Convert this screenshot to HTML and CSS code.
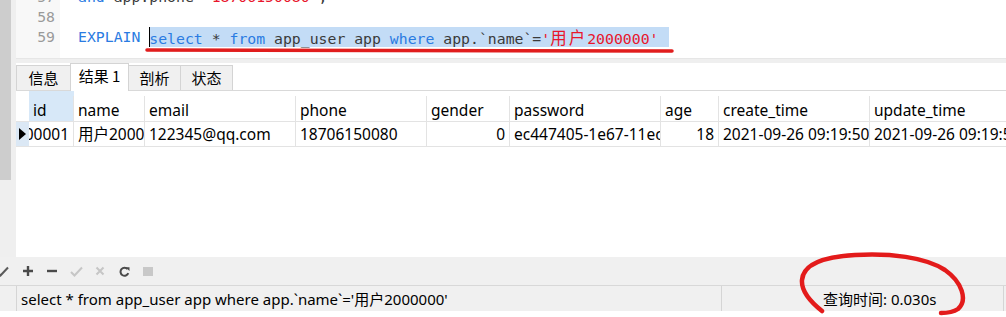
FILE: index.html
```html
<!DOCTYPE html>
<html>
<head>
    <title>查询结果</title>
    <link rel="stylesheet" href="styles.css">
</head>
<body>
    <div class="window">
        <div class="upper">
            <div class="vscroll"><div class="thumb"></div></div>
            <div class="main">
                <div class="editor">
                    <div class="gutter">
                        <div class="lines">
                            <div>57</div>
                            <div>58</div>
                            <div>59</div>
                        </div>
                    </div>
                    <div class="code">
                        <div class="lines">
                            <div class="ln"><span class="kw">and</span> app.phone=<span class="str">'18706150080'</span>;</div>
                            <div class="ln"> </div>
                            <div class="ln"><span class="kw">EXPLAIN</span> <span class="sel"><span class="kw">select</span> * <span class="kw">from</span> app_user app <span class="kw">where</span> app.`name`=<span class="str">'<span class="cjk">用户</span>2000000'</span></span></div>
                        </div>
                    </div>
                </div>

                <div class="tabs">
                    <div class="tab t-info">信息</div>
                    <div class="tab t-result active">结果 1</div>
                    <div class="tab t-prof">剖析</div>
                    <div class="tab t-state">状态</div>
                </div>

                <div class="grid">
                    <div class="cell hd ind-hd"></div>
                    <div class="cell hd picked">id</div>
                    <div class="cell hd">name</div>
                    <div class="cell hd">email</div>
                    <div class="cell hd">phone</div>
                    <div class="cell hd">gender</div>
                    <div class="cell hd">password</div>
                    <div class="cell hd">age</div>
                    <div class="cell hd">create_time</div>
                    <div class="cell hd">update_time</div>

                    <div class="cell ind">
                        <svg width="7" height="12" viewBox="0 0 7 12"><path d="M0 0L7 6L0 12z" fill="#000"/></svg>
                    </div>
                    <div class="cell num">2000001</div>
                    <div class="cell">用户2000001</div>
                    <div class="cell">122345@qq.com</div>
                    <div class="cell">18706150080</div>
                    <div class="cell num">0</div>
                    <div class="cell">ec447405-1e67-11ec-a6f2-00163e0a1b2c</div>
                    <div class="cell num">18</div>
                    <div class="cell">2021-09-26 09:19:50</div>
                    <div class="cell">2021-09-26 09:19:50</div>
                </div>
            </div>
        </div>

        <div class="toolbar">
            <span class="tb cut">
                <svg width="13" height="11" viewBox="0 0 13 11"><path d="M1 6l3.5 3.5L12 1.5" stroke="#5a5a5a" stroke-width="2" fill="none"/></svg>
            </span>
            <span class="tb">
                <svg width="12" height="12" viewBox="0 0 12 12"><path d="M6 1v10M1 6h10" stroke="#4a4a4a" stroke-width="2.4"/></svg>
            </span>
            <span class="tb">
                <svg width="12" height="12" viewBox="0 0 12 12"><path d="M1 6h10" stroke="#4a4a4a" stroke-width="2.4"/></svg>
            </span>
            <span class="tb">
                <svg width="13" height="11" viewBox="0 0 13 11"><path d="M1 6l3.5 3.5L12 1.5" stroke="#c6c6c6" stroke-width="2" fill="none"/></svg>
            </span>
            <span class="tb">
                <svg width="10" height="10" viewBox="0 0 10 10"><path d="M1.5 1.5l7 7M8.5 1.5l-7 7" stroke="#c6c6c6" stroke-width="2"/></svg>
            </span>
            <span class="tb">
                <svg width="11" height="11" viewBox="0 0 11 11"><path d="M8.6 3.2A4 4 0 1 0 9.3 7.2" stroke="#4a4a4a" stroke-width="2" fill="none"/><path d="M6.5 1.2h4v3.8z" fill="#4a4a4a"/></svg>
            </span>
            <span class="tb">
                <svg width="10" height="9" viewBox="0 0 10 9"><rect width="10" height="9" fill="#c8c8c8"/></svg>
            </span>
        </div>

        <div class="statusbar">
            <div class="seg seg-first"></div>
            <div class="seg seg-sql">select * from app_user app where app.`name`='用户2000000'</div>
            <div class="seg seg-time">查询时间: 0.030s</div>
        </div>

        <svg class="marks" width="1006" height="317" viewBox="0 0 1006 317">
            <path d="M147 50L672 51" stroke="#e11d1d" stroke-width="3.5" stroke-linecap="round" fill="none"/>
            <path d="M822 311C812 303 801 292 802 280C803 266 820 257 855 255C890 253 925 257 945 270C962 282 968 300 958 309C952 313 946 313 941 313" stroke="#e31b1b" stroke-width="4.5" stroke-linecap="round" fill="none"/>
        </svg>
    </div>
</body>
</html>
```

FILE: styles.css
```css
body {
    margin: 0;
    background-color: #fff;
    overflow: hidden;
}
.window {
    position: relative;
    width: 1006px;
    height: 317px;
    overflow: hidden;
    font-family: "Noto Sans", "Noto Sans CJK SC", sans-serif;
    color: #000;
}
.upper {
    display: flex;
    height: 257px;
}
.vscroll {
    flex: none;
    width: 16px;
    background-color: #efefef;
}
.thumb {
    width: 11px;
    height: 180px;
    background-color: #cdcdcd;
}
.main {
    flex: 1;
    min-width: 0;
    display: flex;
    flex-direction: column;
    overflow: hidden;
}

/* sql editor */
.editor {
    flex: none;
    display: flex;
    height: 58px;
    overflow: hidden;
    border-bottom: 1px solid #e6e6e6;
    font: 14.8px/20px "DejaVu Sans Mono", monospace;
}
.editor .lines {
    margin-top: -13px;
}
.gutter {
    width: 44px;
    padding-right: 5px;
    box-sizing: border-box;
    background-color: #f8f8f8;
    color: #9a9a9a;
    text-align: right;
}
.code {
    flex: 1;
    padding-left: 18px;
    color: #3a3a3a;
}
.ln {
    height: 20px;
    white-space: pre;
}
.kw {
    color: #2a7be2;
}
.str {
    color: #e8162c;
}
.cjk {
    font-family: "Noto Sans CJK SC", sans-serif;
    font-size: 16.5px;
    letter-spacing: 2px;
}
.sel {
    display: inline-block;
    height: 20px;
    vertical-align: top;
    padding-right: 11px;
    background-color: #c3dcf6;
    box-shadow: inset 1px 0 #000;
}

/* result tabs */
.tabs {
    flex: none;
    display: flex;
    align-items: flex-end;
    height: 27px;
    border-top: 4px solid #efefef;
    border-bottom: 1px solid #d9d9d9;
    font: 15px/18px "Noto Sans CJK SC", sans-serif;
}
.tab {
    display: flex;
    align-items: center;
    justify-content: center;
    height: 25px;
    box-sizing: border-box;
    margin-right: -1px;
    border: 1px solid #d4d4d4;
    border-bottom: none;
    background-color: #f0f0f0;
}
.tab.active {
    height: 28px;
    margin-bottom: -1px;
    padding-bottom: 3px;
    background-color: #fff;
}
.t-info { width: 55px; }
.t-result { width: 59px; }
.t-prof { width: 53px; }
.t-state { width: 53px; }

/* result grid */
.grid {
    display: grid;
    grid-template-columns: 13px 45px 71px 151px 131px 83px 151px 58px 151px 151px;
    grid-template-rows: 31px 25px;
    font-size: 15.5px;
    line-height: 20px;
}
.cell {
    display: flex;
    align-items: center;
    box-sizing: border-box;
    padding: 0 4px;
    border-right: 1px solid #e3e3e3;
    border-bottom: 1px solid #e3e3e3;
    white-space: nowrap;
    overflow: hidden;
}
.hd {
    padding-top: 7px;
    border-right: none;
    background-image: linear-gradient(#e3e3e3, #e3e3e3);
    background-position: right bottom;
    background-size: 1px 25px;
    background-repeat: no-repeat;
}
.ind-hd {
    background-image: none;
}
.hd.picked {
    background-color: #d7e8f8;
}
.num {
    justify-content: flex-end;
}
.ind {
    padding: 0 0 0 3px;
    border-right: none;
    background-color: #dbe8f5;
}

/* bottom toolbar */
.toolbar {
    display: flex;
    align-items: center;
    height: 28px;
    background-color: #f0f0f0;
    border-bottom: 1px solid #d8d8d8;
}
.tb {
    display: flex;
    align-items: center;
    justify-content: center;
    width: 24px;
    height: 24px;
}
.tb.cut {
    width: 28px;
    margin-left: -12px;
}

/* status bar */
.statusbar {
    display: flex;
    height: 25px;
    background-color: #f0f0f0;
    font-size: 15px;
    line-height: 20px;
}
.seg {
    display: flex;
    align-items: center;
    box-sizing: border-box;
    border-right: 1px solid #d5d5d5;
    white-space: nowrap;
}
.seg-first {
    width: 17px;
}
.seg-sql {
    width: 705px;
    padding-left: 4px;
}
.seg-time {
    width: 282px;
    padding-left: 101px;
}

/* hand-drawn marks on the screenshot */
.marks {
    position: absolute;
    left: 0;
    top: 0;
    pointer-events: none;
}
```
